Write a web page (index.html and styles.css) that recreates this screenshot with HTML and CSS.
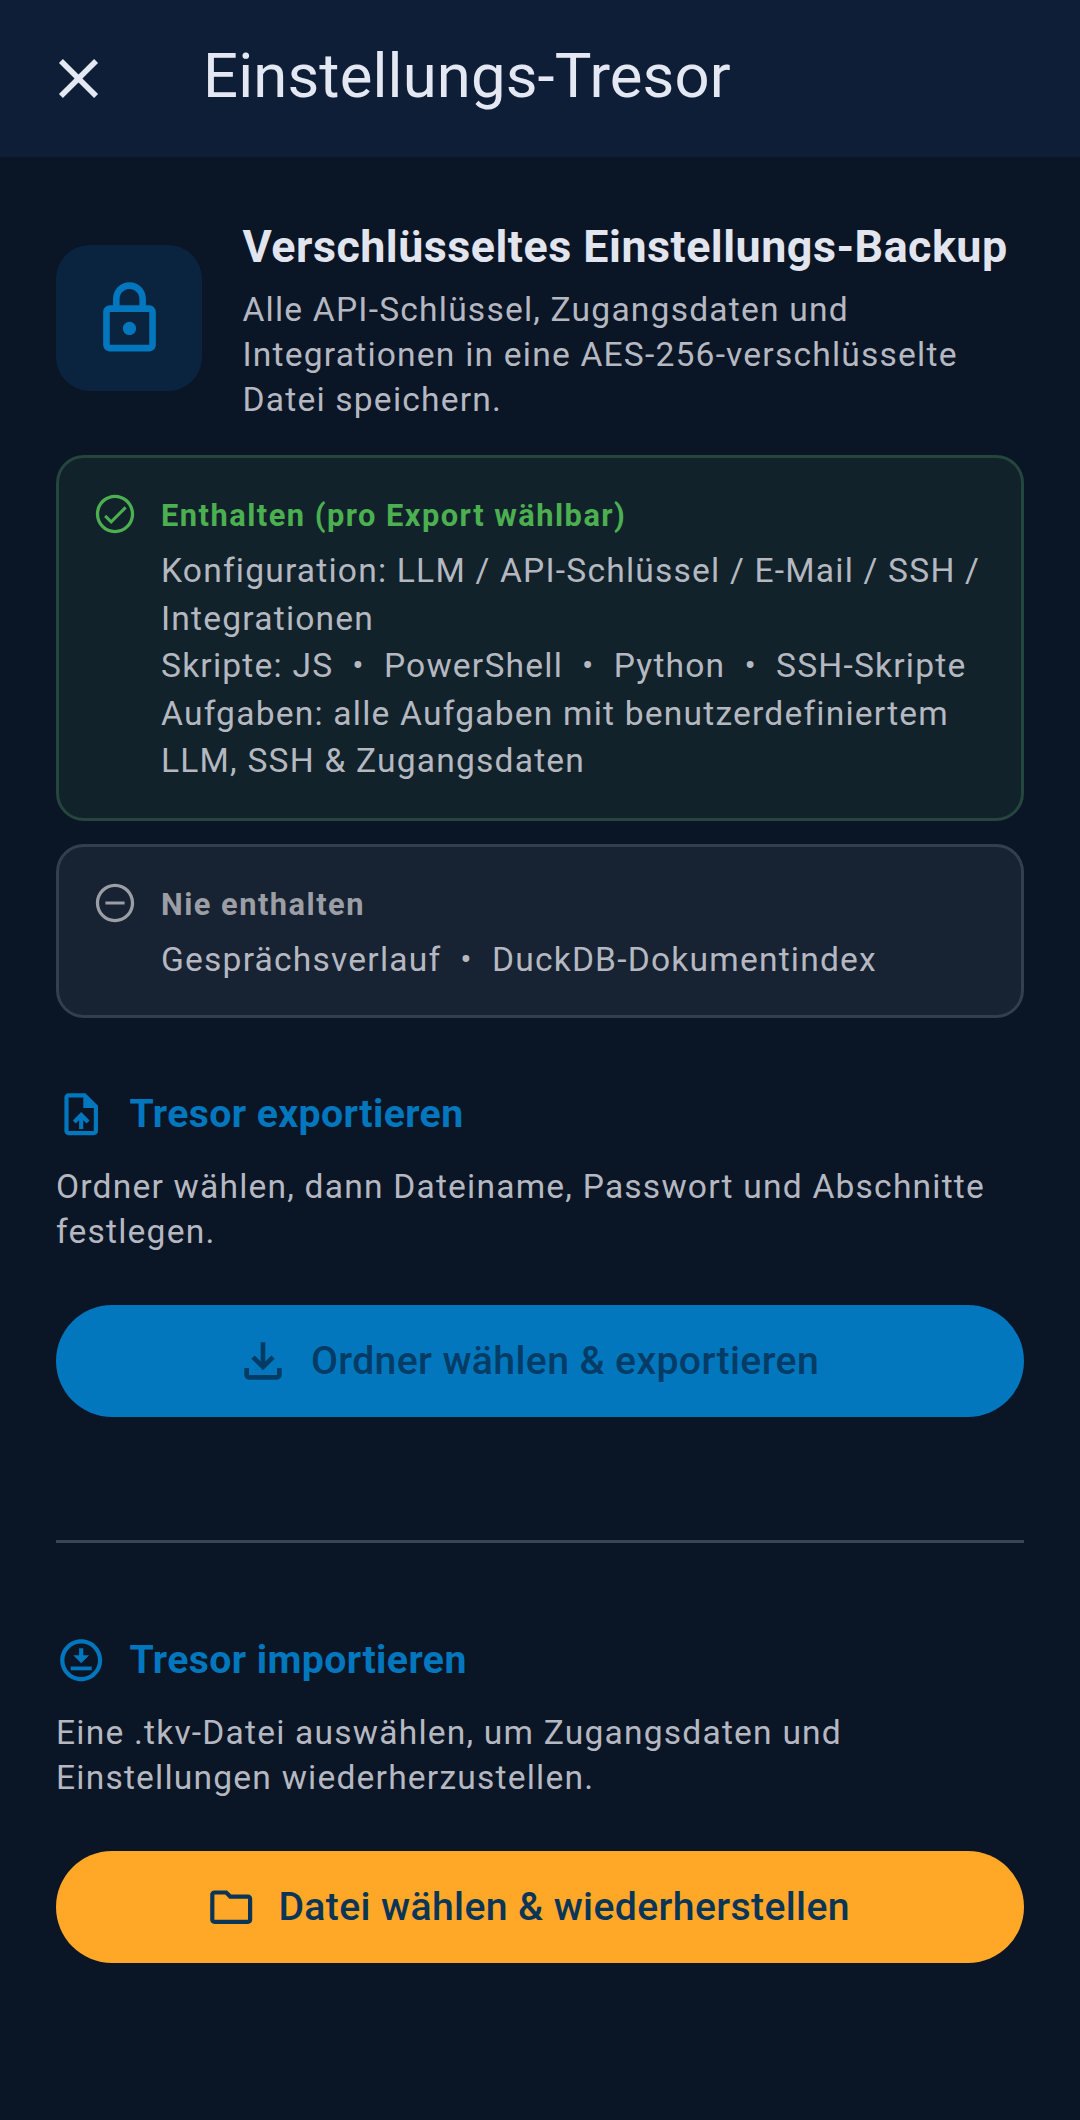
FILE: index.html
```html
<!DOCTYPE html>
<html lang="de">
<head>
    <meta charset="UTF-8">
    <meta name="viewport" content="width=device-width, initial-scale=1.0">
    <title>Einstellungs-Tresor</title>
    <link rel="stylesheet" href="styles.css">
</head>
<body>
<header class="topbar">
    <svg class="close-icon" viewBox="0 0 24 24"><path d="M19 6.41 17.59 5 12 10.59 6.41 5 5 6.41 10.59 12 5 17.59 6.41 19 12 13.41 17.59 19 19 17.59 13.41 12z"/></svg>
    <h1 class="topbar-title">Einstellungs-Tresor</h1>
</header>

<main class="content">
    <section class="intro">
        <div class="intro-badge">
            <svg class="lock-icon" viewBox="0 0 24 24"><path d="M18 8h-1V6c0-2.76-2.24-5-5-5S7 3.24 7 6v2H6c-1.1 0-2 .9-2 2v10c0 1.1.9 2 2 2h12c1.1 0 2-.9 2-2V10c0-1.1-.9-2-2-2zM9 6c0-1.66 1.34-3 3-3s3 1.34 3 3v2H9V6zm9 14H6V10h12v10zm-6-3c1.1 0 2-.9 2-2s-.9-2-2-2-2 .9-2 2 .9 2 2 2z"/></svg>
        </div>
        <div class="intro-text">
            <h2 class="intro-title">Verschlüsseltes Einstellungs-Backup</h2>
            <p class="small-text">Alle API-Schlüssel, Zugangsdaten und Integrationen in eine AES-256-verschlüsselte Datei speichern.</p>
        </div>
    </section>

    <section class="info-card info-card-green">
        <svg class="info-icon" viewBox="0 0 24 24"><path d="M12 2C6.48 2 2 6.48 2 12s4.48 10 10 10 10-4.48 10-10S17.52 2 12 2zm0 18.3c-4.58 0-8.3-3.72-8.3-8.3S7.42 3.7 12 3.7s8.3 3.72 8.3 8.3-3.72 8.3-8.3 8.3zM17 8l-7 7-2.600-2.600-1.100 1.100 3.700 3.700 8.100-8.100z"/></svg>
        <div class="info-body">
            <div class="info-title">Enthalten (pro Export wählbar)</div>
            <div class="info-line">Konfiguration: LLM / API-Schlüssel / E-Mail / SSH / Integrationen</div>
            <div class="info-line">Skripte: JS &nbsp;•&nbsp; PowerShell &nbsp;•&nbsp; Python &nbsp;•&nbsp; SSH-Skripte</div>
            <div class="info-line">Aufgaben: alle Aufgaben mit benutzerdefiniertem LLM, SSH &amp; Zugangsdaten</div>
        </div>
    </section>

    <section class="info-card info-card-gray">
        <svg class="info-icon" viewBox="0 0 24 24"><path d="M7 11.2v1.600h10v-1.600H7zM12 2C6.48 2 2 6.48 2 12s4.48 10 10 10 10-4.48 10-10S17.52 2 12 2zm0 18.300c-4.580 0-8.300-3.720-8.300-8.300S7.420 3.700 12 3.700s8.300 3.720 8.300 8.300-3.720 8.300-8.300 8.300z"/></svg>
        <div class="info-body">
            <div class="info-title">Nie enthalten</div>
            <div class="info-line">Gesprächsverlauf &nbsp;•&nbsp; DuckDB-Dokumentindex</div>
        </div>
    </section>

    <section class="vault-section vault-export">
        <div class="section-head">
            <svg class="section-icon" viewBox="0 0 24 24"><path d="M14 2H6c-1.100 0-2 .9-2 2v16c0 1.100.89 2 1.990 2H18c1.100 0 2-.9 2-2V8l-6-6zm4 18H6V4h7v5h5v11zM8 15.010l1.410 1.410L11 14.840V19h2v-4.160l1.590 1.590L16 15.010 12.010 11z"/></svg>
            <h3 class="section-title">Tresor exportieren</h3>
        </div>
        <p class="small-text section-text">Ordner wählen, dann Dateiname, Passwort und Abschnitte festlegen.</p>
        <button class="action-btn btn-blue" type="button">
            <svg class="btn-icon" viewBox="0 0 24 24"><path d="M18 15v3H6v-3H4v3c0 1.100.9 2 2 2h12c1.100 0 2-.9 2-2v-3h-2zm-1-4-1.410-1.410L13 12.170V4h-2v8.170L8.410 9.590 7 11l5 5 5-5z"/></svg>
            <span>Ordner wählen &amp; exportieren</span>
        </button>
    </section>

    <hr class="divider">

    <section class="vault-section">
        <div class="section-head">
            <svg class="section-icon" viewBox="0 0 24 24"><path d="M12 2C6.490 2 2 6.490 2 12s4.490 10 10 10 10-4.490 10-10S17.510 2 12 2zm0 18c-4.410 0-8-3.590-8-8s3.590-8 8-8 8 3.590 8 8-3.590 8-8 8zM11 6.300v3.400H8.200l3.800 3.800 3.800-3.800H13V6.300zM7 15h10v1.800H7z"/></svg>
            <h3 class="section-title">Tresor importieren</h3>
        </div>
        <p class="small-text section-text">Eine .tkv-Datei auswählen, um Zugangsdaten und Einstellungen wiederherzustellen.</p>
        <button class="action-btn btn-orange" type="button">
            <svg class="btn-icon btn-icon-folder" viewBox="0 0 24 24"><path d="M9.170 6l2 2H20v10H4V6h5.170M10 4H4c-1.100 0-1.990.9-1.990 2L2 18c0 1.100.9 2 2 2h16c1.100 0 2-.9 2-2V8c0-1.100-.9-2-2-2h-8l-2-2z"/></svg>
            <span>Datei wählen &amp; wiederherstellen</span>
        </button>
    </section>
</main>
</body>
</html>
```

FILE: styles.css
```css
* {
    box-sizing: border-box;
}

body {
    margin: 0;
    min-height: 2120px;
    background-color: #0a1526;
    font-family: Roboto, "Noto Sans", sans-serif;
}

h1, h2, h3, p {
    margin: 0;
}

.topbar {
    display: flex;
    align-items: center;
    height: 157px;
    padding-left: 45px;
    background-color: #0e1e37;
}

.close-icon {
    width: 67px;
    height: 67px;
    fill: #e4e8f2;
}

.topbar-title {
    margin-left: 91px;
    padding-bottom: 5px;
    font-size: 61.6px;
    font-weight: 400;
    letter-spacing: 0.14px;
    color: #e4e8f2;
}

.content {
    padding: 65px 56px 0;
}

.intro {
    display: flex;
    align-items: flex-start;
    gap: 40.5px;
}

.intro-badge {
    display: flex;
    flex: none;
    align-items: center;
    justify-content: center;
    width: 146px;
    height: 146px;
    margin-top: 23px;
    border-radius: 34px;
    background-color: #0a2440;
}

.lock-icon {
    width: 79px;
    height: 79px;
    fill: #0277bd;
}

.intro-title {
    font-size: 44.8px;
    line-height: 50px;
    font-weight: 700;
    letter-spacing: 0.5px;
    color: #e2e5ee;
    white-space: nowrap;
}

.small-text {
    font-size: 33.6px;
    line-height: 45px;
    letter-spacing: 1.2px;
    color: #b5b8c0;
}

.intro-text .small-text {
    margin-top: 15px;
}

.info-card {
    display: flex;
    gap: 23px;
    padding: 35px 30px 32px 33px;
    border: 3px solid;
    border-radius: 28px;
}

.info-card-green {
    margin-top: 33px;
    padding-bottom: 33px;
    border-color: #24463d;
    background-color: #11222b;
}

.info-card-gray {
    margin-top: 22.7px;
    border-color: #333e4e;
    background-color: #172232;
}

.info-icon {
    flex: none;
    width: 46px;
    height: 46px;
    margin-top: -2px;
}

.info-card-green .info-icon {
    fill: #4caf50;
}

.info-card-gray .info-icon {
    fill: #9c9ea5;
}

.info-title {
    margin-bottom: 9px;
    font-size: 30.8px;
    line-height: 45px;
    font-weight: 700;
    letter-spacing: 1.48px;
}

.info-card-green .info-title {
    color: #4caf50;
}

.info-card-gray .info-title {
    color: #9c9ea5;
}

.info-line {
    font-size: 33.6px;
    line-height: 47.6px;
    letter-spacing: 1.2px;
    color: #b5b8c0;
}

.vault-export {
    margin-top: 66.2px;
}

.section-head {
    display: flex;
    align-items: center;
    gap: 23px;
    height: 60px;
}

.section-icon {
    flex: none;
    width: 50.4px;
    height: 50.4px;
    fill: #0277bd;
}

.section-title {
    font-size: 39.2px;
    font-weight: 700;
    letter-spacing: 0.4px;
    color: #0277bd;
}

.section-text {
    margin-top: 20px;
}

.action-btn {
    display: flex;
    align-items: center;
    justify-content: center;
    gap: 20px;
    width: 100%;
    height: 112px;
    margin-top: 51px;
    padding: 0 26px 0 0;
    border: none;
    border-radius: 56px;
    font-family: inherit;
    font-size: 39.2px;
    font-weight: 500;
    letter-spacing: 0.36px;
}

.btn-blue {
    background-color: #0277bd;
    color: #043c66;
    fill: #043c66;
}

.btn-orange {
    padding-right: 24px;
    background-color: #ffa726;
    color: #0a3557;
    fill: #0a3557;
}

.btn-icon {
    width: 56px;
    height: 56px;
}

.btn-icon-folder {
    width: 50.4px;
    height: 50.4px;
    margin-right: 2px;
}

.divider {
    height: 3px;
    margin: 122.3px 0 87.5px;
    border: none;
    background-color: #3a4454;
}
```
